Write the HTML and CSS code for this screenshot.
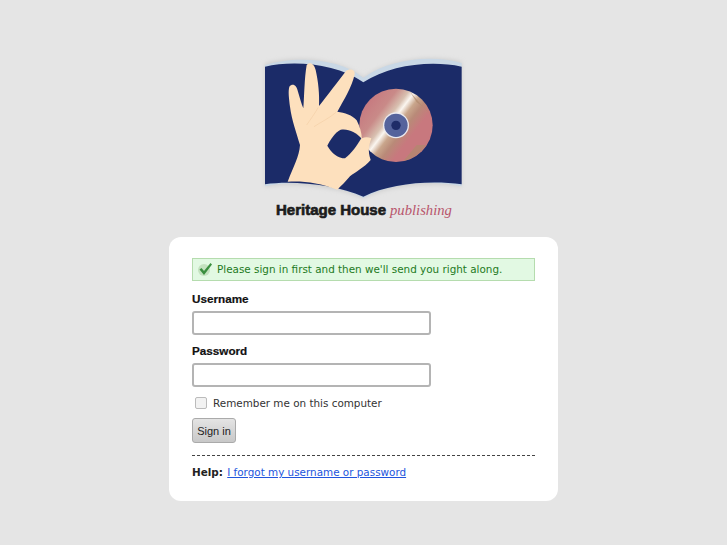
FILE: index.html
```html
<!DOCTYPE html>
<html lang="en">
<head>
  <meta charset="UTF-8" />
  <meta name="viewport" content="width=device-width, initial-scale=1.0" />
  <title>Sign in - Heritage House publishing</title>
  <link rel="stylesheet" href="styles.css">
</head>
<body>

<div class="logo">
  <svg class="logo-art" viewBox="0 0 675 540" width="225" height="180" aria-label="Heritage House publishing">
    <defs>
      <linearGradient id="disc" gradientUnits="userSpaceOnUse" x1="350" y1="173" x2="526" y2="307">
        <stop offset="0" stop-color="#c77a80" />
        <stop offset="0.22" stop-color="#c98a88" />
        <stop offset="0.36" stop-color="#d8c0b0" />
        <stop offset="0.43" stop-color="#fbf6f0" />
        <stop offset="0.52" stop-color="#c9a68c" />
        <stop offset="0.62" stop-color="#b98a78" />
        <stop offset="0.76" stop-color="#c8787e" />
        <stop offset="1" stop-color="#c8787e" />
      </linearGradient>
      <filter id="soft"><feGaussianBlur stdDeviation="2" /></filter>
      <filter id="halo"><feGaussianBlur stdDeviation="7" /></filter>
    </defs>
    <path class="halo" d="M45 55C130 30 270 38 340 98C420 42 540 28 635 50L635 425C540 412 420 420 340 460C260 425 130 412 45 425Z" filter="url(#halo)" />
    <path class="page-edge" d="M45 60C130 32 270 38 340 98C420 42 540 28 635 54L635 72C540 50 420 62 340 116C260 60 130 50 45 70Z" filter="url(#soft)" />
    <path class="page-edge" d="M45 424C130 404 260 417 340 459C420 414 540 404 635 424L635 412C540 398 420 408 340 445C260 408 130 396 45 412Z" filter="url(#soft)" />
    <path class="cover" d="M45 65C130 45 260 55 340 112C420 60 540 45 635 65L635 418C540 405 420 415 340 455C260 420 130 405 45 418Z" />
    <circle cx="438" cy="241" r="110" fill="url(#disc)" />
    <path class="disc-glint" d="M480 140L545 215L525 190L500 172Z" filter="url(#soft)" />
    <path class="disc-glint" d="M460 348C490 342 515 322 528 300L500 300Z" filter="url(#soft)" />
    <circle cx="438" cy="241" r="39" fill="#eceaf0" />
    <circle cx="438" cy="241" r="35" fill="#55639c" />
    <circle cx="438" cy="241" r="14" fill="#1f2c68" />
    <path class="hand" d="M113 410C130 365 148 335 150 300C140 265 125 225 120 185C117 160 114 140 118 125C128 113 140 120 144 140C150 160 154 175 160 190C163 150 163 100 170 60C178 50 192 54 197 75C205 110 209 150 207 183C232 152 265 108 288 78C298 70 316 72 314 88C306 125 282 165 262 200C284 203 307 210 320 226C330 245 334 262 336 280C344 276 354 276 364 280C358 298 352 315 362 345C342 368 317 380 300 394C287 410 272 424 262 434C210 414 160 407 113 410Z" />
    <path class="hole" d="M232 302C240 285 255 262 272 254C295 250 318 262 334 280C322 300 305 325 285 340C265 340 245 325 232 302Z" />
    <path class="crease" d="M170 240C180 225 195 205 205 187M192 245C215 230 240 218 258 202" />
    <text class="brand" x="78" y="509">Heritage House</text>
    <text class="brand-sub" x="420" y="509">publishing</text>
  </svg>
</div>

<div class="card">
  <div class="message">
    <svg class="message-icon" viewBox="0 0 16 16" width="16" height="16" aria-hidden="true">
      <circle cx="7" cy="9" r="6" fill="#c4e2c0" />
      <path d="M2.5 8.5L4.5 7L7 10L13.5 2L15 3.5L7 14Z" fill="#3a8f3f" />
    </svg>
    <span>Please sign in first and then we'll send you right along.</span>
  </div>

  <form class="login-form">
    <label class="field-label field-label-first" for="username">Username</label>
    <input class="text-input" type="text" id="username" />

    <label class="field-label" for="password">Password</label>
    <input class="text-input" type="password" id="password" />

    <label class="remember"><span class="check-box"></span> Remember me on this computer</label>

    <button class="sign-in" type="button">Sign in</button>
  </form>

  <div class="help"><strong>Help:</strong> <a href="#">I forgot my username or password</a></div>
</div>

</body>
</html>
```

FILE: styles.css
```css
body {
  margin: 0;
  font-family: 'DejaVu Sans', sans-serif;
  font-size: 10.4px;
  background-color: #e5e5e5;
  color: #222;
}

.logo {
  display: flex;
  justify-content: center;
  padding-top: 45px;
  padding-right: 2px;
  margin-bottom: 12px;
}

.logo-art {
  display: block;
}

.halo {
  fill: #cfcfcf;
}

.page-edge {
  fill: #c9d8e6;
}

.cover {
  fill: #1b2b68;
}

.disc-glint {
  fill: #b08a6e;
  opacity: 0.7;
}

.hand {
  fill: #fde0bd;
}

.hole {
  fill: #1b2b68;
}

.crease {
  fill: none;
  stroke: #f3cfa6;
  stroke-width: 2;
}

.brand {
  font-family: 'Liberation Sans', sans-serif;
  font-weight: bold;
  font-size: 45px;
  fill: #1c1c1c;
  stroke: #1c1c1c;
  stroke-width: 2;
}

.brand-sub {
  font-family: 'Liberation Serif', serif;
  font-style: italic;
  font-size: 44px;
  fill: #b8556c;
}

.card {
  width: 343px;
  margin: 0 auto;
  padding: 21px 23px 21px 23px;
  background-color: #fff;
  border-radius: 12px;
}

.message {
  display: flex;
  align-items: center;
  gap: 4px;
  height: 20px;
  padding-left: 4px;
  padding-bottom: 1px;
  background-color: #e2f9e3;
  border: 1px solid #b5dcae;
  color: #1d7a22;
}

.message-icon {
  flex: none;
}

.login-form {
  display: flex;
  flex-direction: column;
  align-items: flex-start;
}

.field-label {
  margin-top: 8px;
  margin-bottom: 4px;
  font-family: 'Liberation Sans', sans-serif;
  font-size: 11.7px;
  font-weight: bold;
  line-height: 16px;
  color: #111;
  -webkit-text-stroke: 0.2px #111;
}

.field-label-first {
  margin-top: 10px;
}

.text-input {
  box-sizing: border-box;
  width: 239px;
  height: 24px;
  padding: 2px 4px;
  background-color: #fff;
  border: 2px solid #b4b4b4;
  border-radius: 3px;
}

.remember {
  display: flex;
  align-items: center;
  gap: 6px;
  height: 16px;
  margin-top: 8px;
  padding-left: 3px;
  color: #333;
}

.check-box {
  box-sizing: border-box;
  width: 12px;
  height: 12px;
  background-color: #f2f2f2;
  border: 1px solid #bbb;
  border-radius: 2px;
}

.sign-in {
  box-sizing: border-box;
  width: 44px;
  height: 25px;
  margin-top: 7px;
  padding: 0;
  font-family: 'Liberation Sans', sans-serif;
  font-size: 11px;
  color: #222;
  background: linear-gradient(to bottom, #e4e4e4, #c8c8c8);
  border: 1px solid #aaa;
  border-radius: 3px;
}

.help {
  margin-top: 12px;
  padding-top: 9px;
  border-top: 1px dashed #444;
  line-height: 15px;
}

.help strong {
  margin-right: 1px;
}

.help a {
  color: #2255dd;
}
```
